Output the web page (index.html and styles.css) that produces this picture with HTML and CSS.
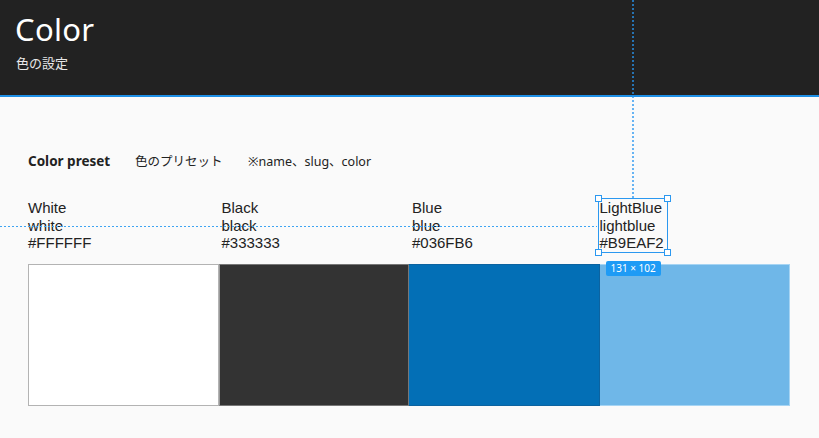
FILE: index.html
```html
<!DOCTYPE html>
<html lang="ja">
<head>
<meta charset="utf-8">
<link rel="stylesheet" href="styles.css">
</head>
<body>
<header class="header">
  <h1 class="title">Color</h1>
  <p class="subtitle">色の設定</p>
</header>
<main class="main">
  <div class="preset-head">
    <span class="preset-title">Color preset</span>
    <span class="preset-ja">色のプリセット</span>
    <span class="preset-note">※name、slug、color</span>
  </div>
  <div class="labels">
    <div class="label"><div>White</div><div>white</div><div>#FFFFFF</div></div>
    <div class="label label-pad"><div>Black</div><div>black</div><div>#333333</div></div>
    <div class="label label-pad"><div>Blue</div><div>blue</div><div>#036FB6</div></div>
    <div class="label label-sel"><div>LightBlue</div><div>lightblue</div><div>#B9EAF2</div>
      <span class="handle h-tl"></span><span class="handle h-tr"></span>
      <span class="handle h-bl"></span><span class="handle h-br"></span>
      <span class="badge">131 × 102</span>
    </div>
  </div>
  <div class="swatches">
    <div class="swatch sw-white"></div>
    <div class="swatch sw-black"></div>
    <div class="swatch sw-blue"></div>
    <div class="swatch sw-light"></div>
  </div>
</main>
<div class="guide-v"></div>
<div class="guide-h"></div>
</body>
</html>
```
FILE: styles.css
```css
* { box-sizing: border-box; }
html, body { margin: 0; padding: 0; }
body {
  background: #fafafa;
  font-family: "Noto Sans", "Noto Sans CJK JP", sans-serif;
  color: #222;
  width: 819px;
  height: 438px;
  overflow: hidden;
  position: relative;
}
.header {
  background: #222222;
  height: 97px;
  border-bottom: 2px solid #1d8fe6;
  padding: 9px 0 0 15px;
  color: #fff;
}
.title {
  margin: 0;
  font-size: 31px;
  font-weight: 400;
  line-height: 40px;
  letter-spacing: 0.3px;
}
.subtitle {
  margin: 5px 0 0 1px;
  font-size: 13px;
  line-height: 18px;
  color: #e8e8e8;
}
.main {
  padding: 55px 29px 0 28px;
}
.preset-head {
  display: flex;
  align-items: baseline;
  font-size: 12.5px;
  line-height: 18px;
  color: #222;
}
.preset-title { font-weight: 700; width: 107px; font-size: 13.5px; }
.preset-ja { width: 113px; }
.labels {
  margin-top: 28px;
  display: grid;
  grid-template-columns: repeat(4, 1fr);
  font-family: "Liberation Sans", "Noto Sans CJK JP", sans-serif;
  font-size: 15px;
  line-height: 17.5px;
  color: #222;
}
.label-pad { padding-left: 3px; }
.label-sel {
  position: relative;
  justify-self: start;
  width: 68px;
  height: 53px;
  margin-left: -1px;
  padding-left: 1px;
  outline: 1.5px solid #2b98f0;
  white-space: nowrap;
}
.handle {
  position: absolute;
  width: 7px;
  height: 7px;
  background: #fff;
  border: 1px solid #2b98f0;
}
.h-tl { left: -4px; top: -4px; }
.h-tr { right: -4px; top: -4px; }
.h-bl { left: -4px; bottom: -4px; }
.h-br { right: -4px; bottom: -4px; }
.badge {
  position: absolute;
  left: 7px;
  bottom: -24px;
  background: #1e9bf5;
  color: #fff;
  font-family: "Noto Sans", sans-serif;
  font-size: 10px;
  line-height: 15px;
  padding: 0 5px;
  border-radius: 2px;
}
.swatches {
  margin-top: 12px;
  display: grid;
  grid-template-columns: repeat(4, 1fr);
  height: 142px;
}
.swatch { border: 1px solid rgba(0,0,0,0.28); }
.sw-white { background: #fff; border-color: #b3b3b3; }
.sw-black { background: #333333; border-color: #777; border-left-color: #999; }
.sw-blue { background: #036fb6; border-color: #0c63a0; border-left: none; }
.sw-light { background: #6fb7e8; border-color: #a6d4f3; border-left: none; }
.guide-v {
  position: absolute;
  left: 632px;
  top: 0;
  width: 2px;
  height: 199px;
  background: repeating-linear-gradient(to bottom, rgba(40, 150, 240, 0.7) 0 2px, transparent 2px 4px);
}
.guide-h {
  position: absolute;
  left: 0;
  top: 226px;
  width: 597px;
  height: 1px;
  background: repeating-linear-gradient(to right, #3ea4f2 0 2px, transparent 2px 4px);
}
```
